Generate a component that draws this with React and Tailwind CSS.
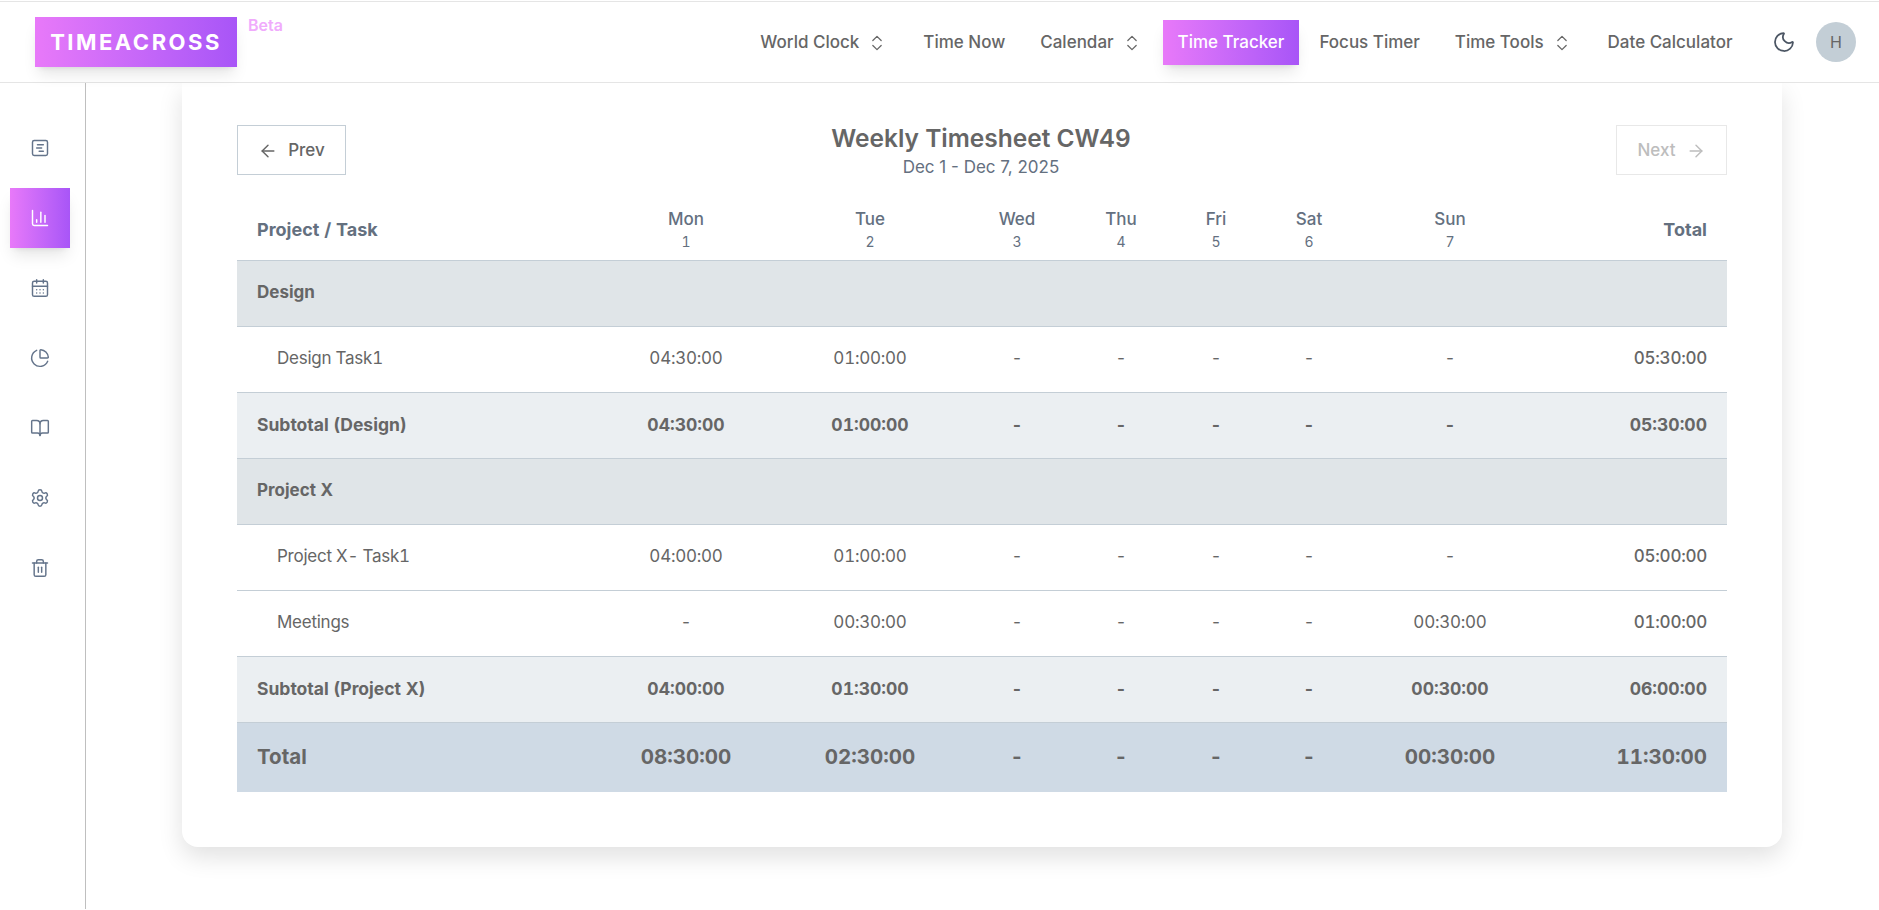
import {
  ArrowLeft,
  ArrowRight,
  BookOpen,
  CalendarDays,
  ChartColumn,
  ChartPie,
  ChevronsUpDown,
  Moon,
  Settings,
  SquareChartGantt,
  Trash2,
} from "lucide-react"

const gradient = "bg-gradient-to-r from-[#e879f9] to-[#a855f7]"

const navItems = [
  { label: "World Clock", menu: true },
  { label: "Time Now" },
  { label: "Calendar", menu: true },
  { label: "Time Tracker", active: true },
  { label: "Focus Timer" },
  { label: "Time Tools", menu: true },
  { label: "Date Calculator" },
]

const sideIcons = [SquareChartGantt, ChartColumn, CalendarDays, ChartPie, BookOpen, Settings, Trash2]

const days = [
  ["Mon", 1],
  ["Tue", 2],
  ["Wed", 3],
  ["Thu", 4],
  ["Fri", 5],
  ["Sat", 6],
  ["Sun", 7],
]

const rows = [
  { type: "group", name: "Design" },
  { type: "task", name: "Design Task1", values: ["04:30:00", "01:00:00", "-", "-", "-", "-", "-", "05:30:00"] },
  { type: "sub", name: "Subtotal (Design)", values: ["04:30:00", "01:00:00", "-", "-", "-", "-", "-", "05:30:00"] },
  { type: "group", name: "Project X" },
  { type: "task", name: "Project X- Task1", values: ["04:00:00", "01:00:00", "-", "-", "-", "-", "-", "05:00:00"] },
  { type: "task", name: "Meetings", values: ["-", "00:30:00", "-", "-", "-", "-", "00:30:00", "01:00:00"] },
  { type: "sub", name: "Subtotal (Project X)", values: ["04:00:00", "01:30:00", "-", "-", "-", "-", "00:30:00", "06:00:00"] },
]

const totals = ["08:30:00", "02:30:00", "-", "-", "-", "-", "00:30:00", "11:30:00"]

const Header = () => {
  return (
    <header className="h-[82px] shrink-0 flex items-center justify-between pl-[35px] pr-[23px] bg-white border-t border-b border-[#e5e5e5] relative z-10">
      <div className="flex items-start self-start mt-[15px]">
        <div className={`${gradient} w-[202px] h-[50px] flex items-center justify-center text-white text-[22px] font-bold tracking-[2.5px] shadow-lg`}>
          TIMEACROSS
        </div>
        <span className="ml-[11px] -mt-[2px] text-[16px] leading-[20px] font-semibold text-[#f0abfc]">Beta</span>
      </div>
      <nav className="flex items-center text-[17px] text-[#666]">
        {navItems.map((item) => (
          <a
            key={item.label}
            href="#"
            className={`h-[45px] px-[15px] mx-[2.5px] pt-px flex items-center font-medium ${item.active ? `${gradient} text-white shadow-lg` : ""}`}
          >
            {item.label}
            {item.menu && <ChevronsUpDown size={20} strokeWidth={1.5} className="ml-[8px] mr-px" />}
          </a>
        ))}
        <Moon size={24} strokeWidth={1.75} className="ml-[22px] text-[#4b5563]" />
        <div className="ml-[20px] w-10 h-10 rounded-full bg-[#c3ced6] flex items-center justify-center text-[16px] text-[#666]">H</div>
      </nav>
    </header>
  )
}

const Sidebar = () => {
  return (
    <aside className="w-[86px] shrink-0 border-r border-[#bfbfbf] flex flex-col items-start gap-[10px] pl-[10px] pt-[35px]">
      {sideIcons.map((Icon, i) => (
        <a
          key={i}
          href="#"
          className={`w-[60px] h-[60px] flex items-center justify-center ${i === 1 ? `${gradient} text-white shadow-lg` : "text-[#64748b]"}`}
        >
          <Icon size={20} strokeWidth={1.75} />
        </a>
      ))}
    </aside>
  )
}

const Timesheet = () => {
  const cell = "text-center"
  return (
    <table className="w-[1490px] table-fixed border-collapse text-[17px] text-[#666] tabular-nums">
      <colgroup>
        <col className="w-[357px]" />
        <col className="w-[184px]" />
        <col className="w-[184px]" />
        <col className="w-[110px]" />
        <col className="w-[98px]" />
        <col className="w-[92px]" />
        <col className="w-[94px]" />
        <col className="w-[188px]" />
        <col className="w-[183px]" />
      </colgroup>
      <thead>
        <tr className="h-[61px] border-b border-[#c4ced6] text-[#64707f]">
          <th className="pl-5 text-left font-bold text-[18px]">Project / Task</th>
          {days.map(([day, num]) => (
            <th key={day} className="font-medium pt-[2px]">
              <div className="leading-[24px]">{day}</div>
              <div className="text-[14px] leading-[22px] font-normal">{num}</div>
            </th>
          ))}
          <th className="pr-5 text-right font-bold text-[18px]">Total</th>
        </tr>
      </thead>
      <tbody>
        {rows.map((row) => {
          if (row.type === "group") {
            return (
              <tr key={row.name} className="h-[66px] bg-[#e0e5e8] border-b border-[#c4ced6]">
                <td colSpan={9} className="pl-5 font-bold">{row.name}</td>
              </tr>
            )
          }
          const isSub = row.type === "sub"
          return (
            <tr key={row.name} className={`h-[66px] border-b border-[#c4ced6] ${isSub ? "bg-[#ebeff2] font-bold text-[17.5px]" : "tracking-[-0.25px]"}`}>
              <td className={isSub ? "pl-5" : "pl-10"}>{row.name}</td>
              {row.values.slice(0, 7).map((v, i) => (
                <td key={i} className={cell}>{v}</td>
              ))}
              <td className={`pr-5 text-right ${isSub ? "" : "font-medium"}`}>{row.values[7]}</td>
            </tr>
          )
        })}
        <tr className="h-[70px] bg-[#cfdae5] font-bold text-[20.5px]">
          <td className="pl-5">Total</td>
          {totals.slice(0, 7).map((v, i) => (
            <td key={i} className={cell}>{v}</td>
          ))}
          <td className="pr-5 text-right">{totals[7]}</td>
        </tr>
      </tbody>
    </table>
  )
}

export default function App() {
  return (
    <div className="h-[909px] pt-px overflow-hidden flex flex-col bg-white font-['Inter',sans-serif]">
      <Header />
      <div className="flex-1 flex min-h-0">
        <Sidebar />
        <main className="flex-1 min-w-0 overflow-hidden pl-[96px]">
          <div className="w-[1600px] bg-white rounded-b-2xl shadow-[0_10px_25px_rgba(0,0,0,0.12)] pt-[39px] pl-[55px] pr-[55px] pb-[55px]">
            <div className="flex items-center justify-between mb-[21px]">
              <button className="w-[109px] h-[50px] pt-[2px] border border-[#c4ced6] flex items-center justify-center gap-[10px] text-[17px] font-medium text-[#666]">
                <ArrowLeft size={20} strokeWidth={1.75} />
                Prev
              </button>
              <div className="text-center">
                <h1 className="text-[24.5px] leading-[32px] font-semibold text-[#666]">Weekly Timesheet CW49</h1>
                <p className="mt-px -mb-px text-[17px] leading-[24px] text-[#64707f]">Dec 1 - Dec 7, 2025</p>
              </div>
              <button className="w-[111px] h-[50px] pt-[2px] border border-[#e8e8e8] flex items-center justify-center gap-[10px] text-[17px] font-medium text-[#bdbdbd]">
                Next
                <ArrowRight size={20} strokeWidth={1.75} />
              </button>
            </div>
            <Timesheet />
          </div>
        </main>
      </div>
    </div>
  )
}
